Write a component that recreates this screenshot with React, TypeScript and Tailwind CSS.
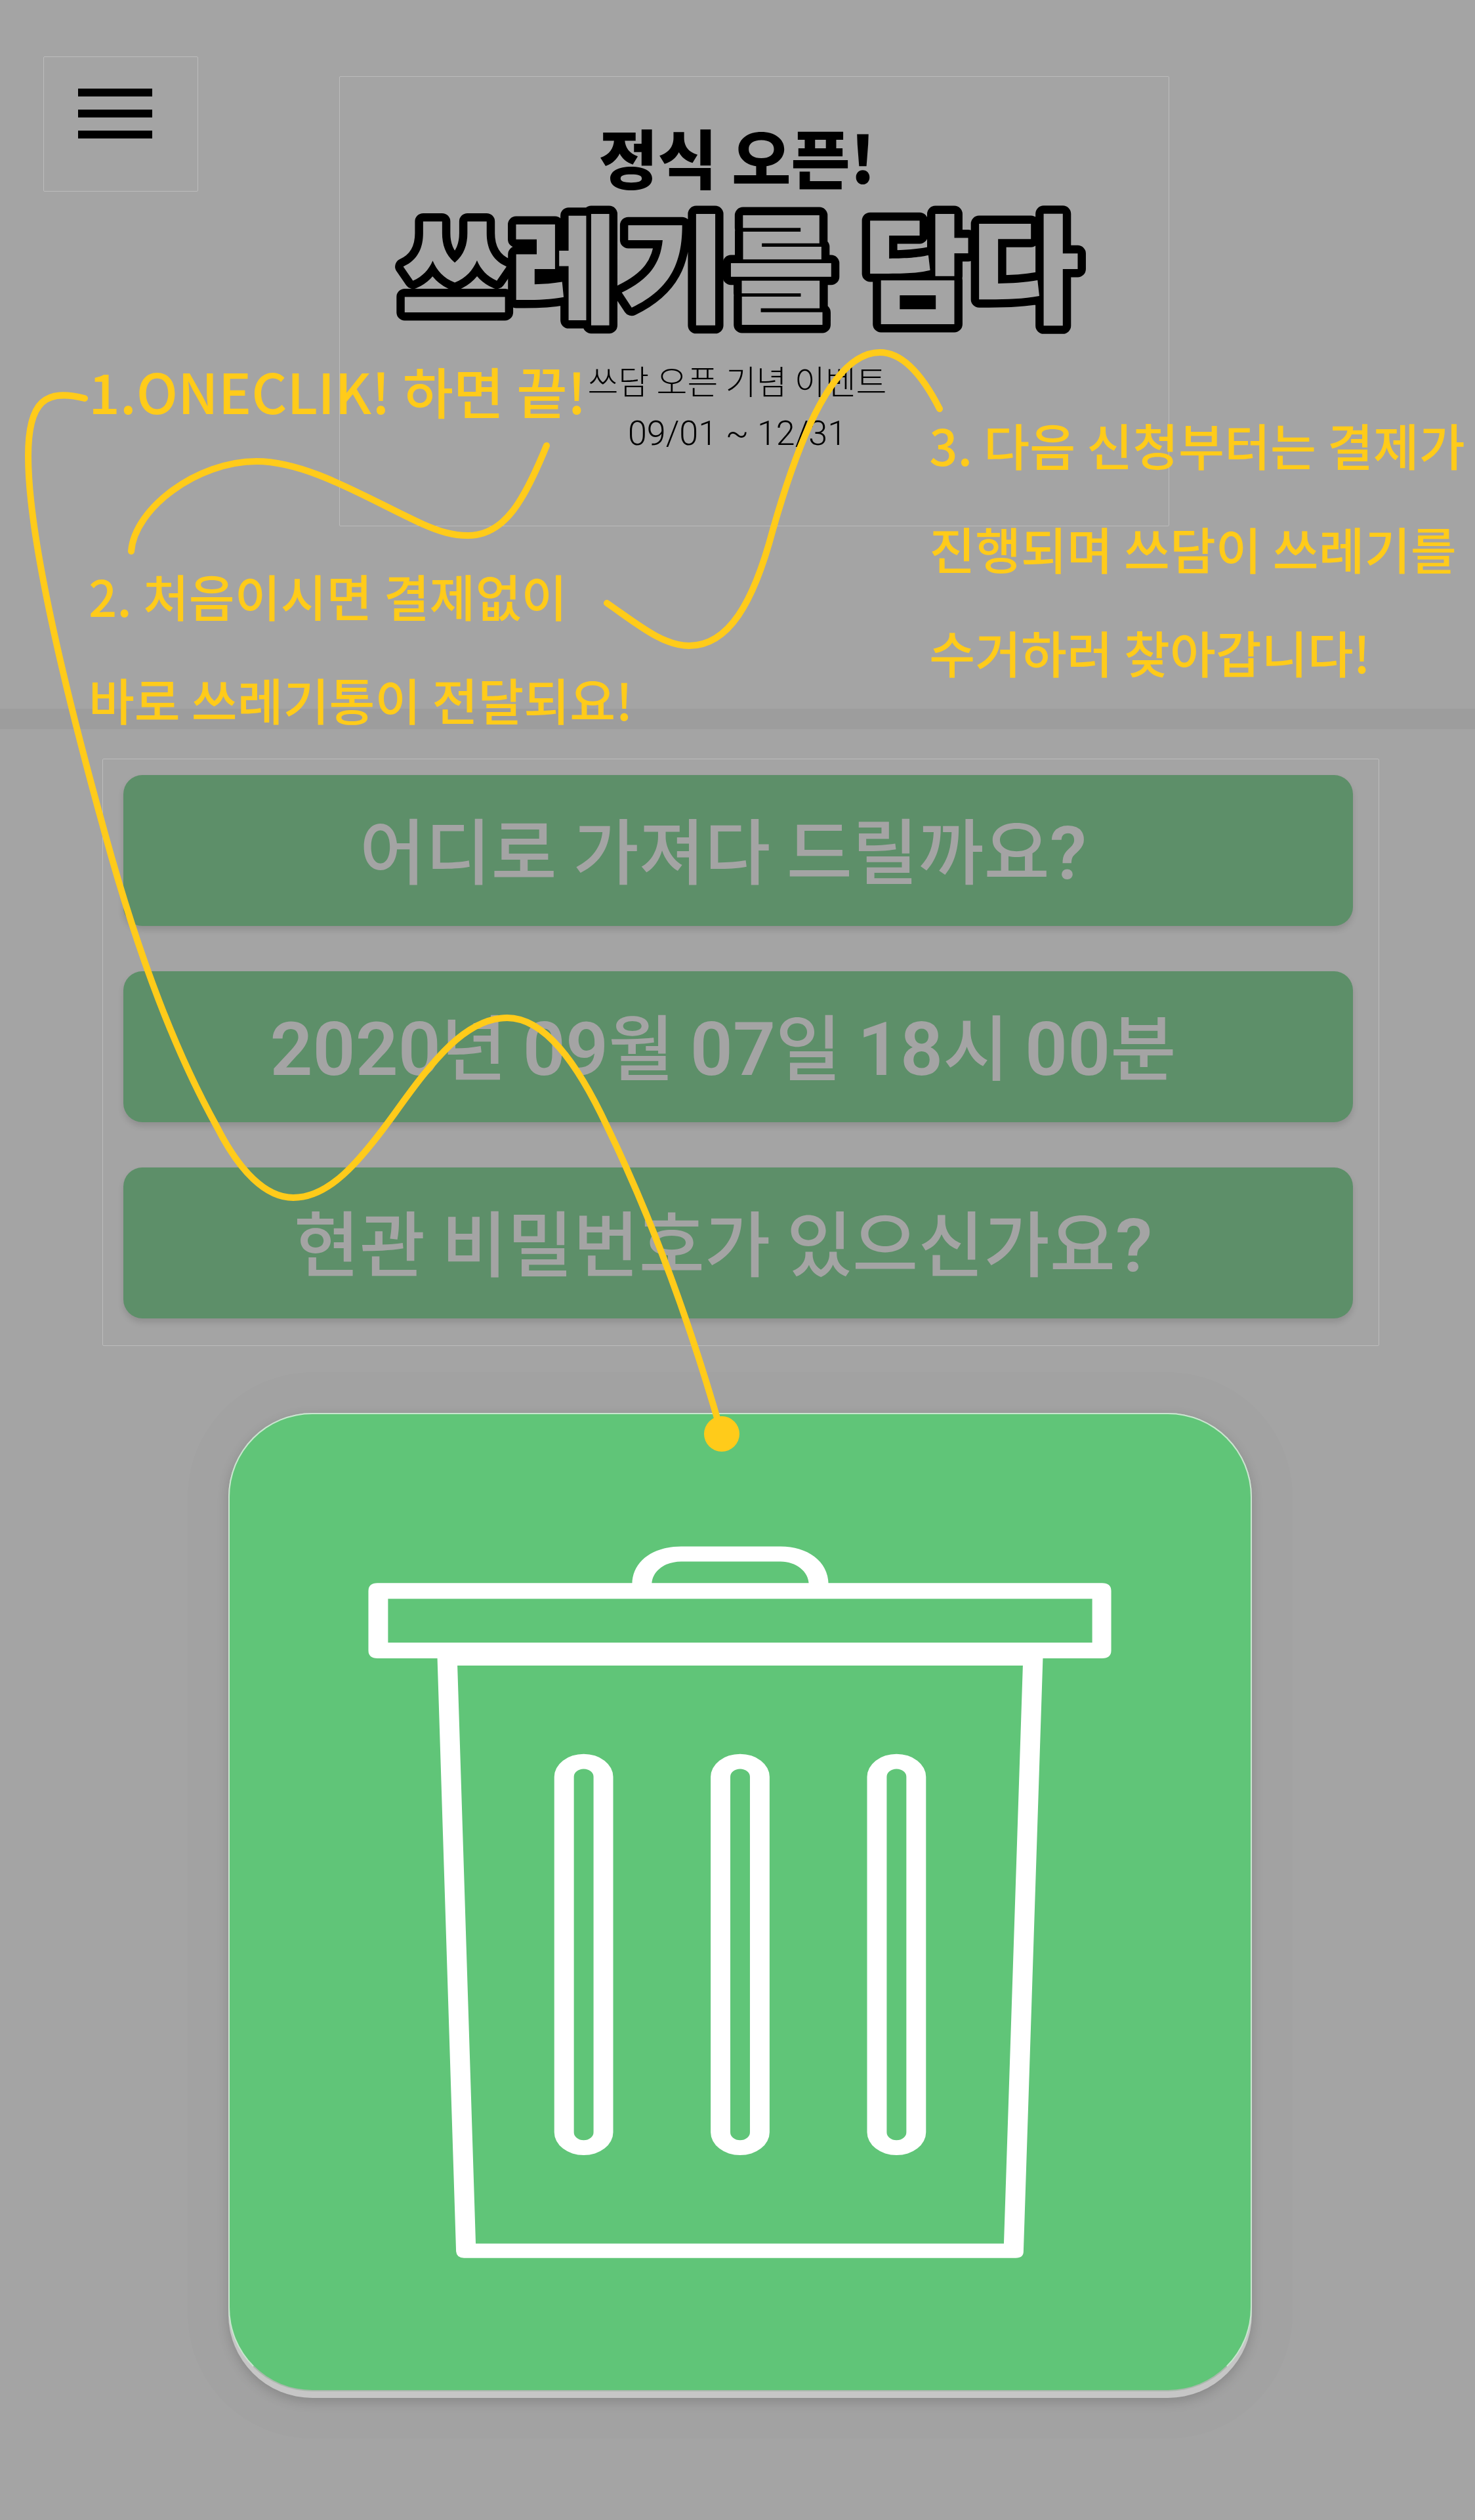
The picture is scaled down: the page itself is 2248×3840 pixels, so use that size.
import { Fragment } from "react";

const steps = [
  { id: "address", label: "어디로 가져다 드릴까요?" },
  { id: "schedule", label: "2020년 09월 07일 18시 00분" },
  { id: "door", label: "현관 비밀번호가 있으신가요?" },
];

/* Latin digits and marks are set in Roboto, a little larger than the Hangul. */
function StepLabel({ text }: { text: string }) {
  return (
    <>
      {text.split(/([0-9?]+)/).map((part, i) =>
        /[0-9?]/.test(part) ? (
          <span key={i} className="font-['Roboto'] text-[114px] font-semibold">
            {part}
          </span>
        ) : (
          <Fragment key={i}>{part}</Fragment>
        ),
      )}
    </>
  );
}

function MenuButton() {
  return (
    <button
      type="button"
      aria-label="메뉴"
      className="flex h-[206px] w-[236px] shrink-0 flex-col gap-5 rounded-[2px] border border-[#bcbcbc] pt-[48px] pl-[52px]"
    >
      <span className="h-3 w-[113px] bg-black" />
      <span className="h-3 w-[113px] bg-black" />
      <span className="h-3 w-[113px] bg-black" />
    </button>
  );
}

function Banner() {
  return (
    <a
      href="#event"
      className="mt-[30px] mr-[400px] ml-[215px] flex flex-1 flex-col items-center rounded-[2px] border border-[#bcbcbc] pt-[72px] pr-[52px] pb-[110px] text-black"
    >
      <span className="text-[98px] leading-[96px] font-black whitespace-nowrap">정식 오픈!</span>
      <h1 className="mt-4">
        <svg viewBox="0 0 1080 208" className="block h-[208px] w-[1080px] overflow-visible">
          <text
            x="544"
            y="177"
            textAnchor="middle"
            fill="#a4a4a4"
            stroke="#000000"
            strokeWidth="25"
            strokeLinejoin="round"
            paintOrder="stroke"
            className="text-[180px] font-black"
          >
            쓰레기를 담다
          </text>
        </svg>
      </h1>
      <span className="mt-10 text-[51px] leading-[60px] font-light whitespace-nowrap">
        쓰담 오픈 기념 이벤트
      </span>
      <span className="mt-[22px] font-['Roboto'] text-[52px] leading-[60px] font-light whitespace-nowrap">
        09/01 ~ 12/31
      </span>
    </a>
  );
}

function TrashDrawing() {
  return (
    <svg viewBox="348 2154 1560 1491" className="block w-full" aria-hidden="true">
      <g fill="#ffffff" fillRule="evenodd">
        <path d="M963 2414C963 2378 996 2356 1038 2356H1190C1230 2356 1263 2378 1263 2414H1233C1233 2394 1213 2379 1190 2379H1038C1013 2379 993 2394 993 2414Z" />
        <path d="M574 2412H1681Q1695 2412 1695 2424V2515Q1695 2527 1681 2527H574Q560 2527 560 2515V2424Q560 2412 574 2412ZM590 2436V2503H1666V2436Z" />
        <path d="M665 2515H1591L1561 3433Q1561 3443 1549 3443H706Q695 3443 694 3433ZM696 2538L724 3421H1531L1560 2538Z" />
        {[844, 1083, 1322].map((x) => (
          <path
            key={x}
            d={`M${x} 2708a45 35 0 0 1 90 0V3251a45 35 0 0 1 -90 0ZM${x + 30} 2708V3251a15 12 0 0 0 30 0V2708a15 12 0 0 0 -30 0Z`}
          />
        ))}
      </g>
    </svg>
  );
}

function GuideLines() {
  return (
    <svg
      viewBox="0 0 2248 3840"
      className="pointer-events-none absolute inset-x-0 top-0 w-full"
      aria-hidden="true"
    >
      <g fill="none" stroke="#ffcb1a" strokeWidth="10" strokeLinecap="round" strokeLinejoin="round">
        <path d="M129 607C70 592 43 610 43 695C43 830 110 1090 158 1263C205 1436 260 1590 330 1716C365 1785 405 1825 447 1825C500 1825 545 1775 602 1696C660 1615 710 1551 773 1551C830 1551 880 1620 925 1716C990 1850 1050 2010 1100 2185" />
        <path d="M200 840C205 775 300 703 391 703C470 703 560 760 645 799C670 810 690 816 713 816C770 816 800 760 833 679" />
        <path d="M925 919C970 950 1010 984 1050 984C1110 984 1148 920 1178 807C1220 660 1272 537 1341 537C1375 537 1405 570 1432 623" />
      </g>
      <circle cx="1100" cy="2185" r="27" fill="#ffcb1a" />
    </svg>
  );
}

function Notes() {
  return (
    <div className="pointer-events-none absolute inset-x-0 top-0 text-[76px] leading-[158px] font-medium whitespace-nowrap text-[#ffcb1a]">
      <p className="absolute top-[516px] left-[6%] text-[84px]">1.ONECLIK! 하면 끝!</p>
      <p className="absolute top-[828px] left-[6%]">
        2. 처음이시면 결제없이
        <br />
        바로 쓰레기통이 전달되요!
      </p>
      <p className="absolute top-[598px] left-[63%]">
        3. 다음 신청부터는 결제가
        <br />
        진행되며 쓰담이 쓰레기를
        <br />
        수거하러 찾아갑니다!
      </p>
    </div>
  );
}

export default function App() {
  return (
    <main className="relative min-h-screen overflow-hidden bg-[#a4a4a4] pb-[184px] font-['Noto_Sans_CJK_KR',sans-serif]">
      <header className="flex items-start border-b-[31px] border-[#9d9d9d] px-[66px] pt-[86px] pb-[278px]">
        <MenuButton />
        <Banner />
      </header>

      <section className="mt-[45px] mr-[146px] ml-[156px] flex flex-col gap-[69px] rounded-[2px] border border-[#bcbcbc] pt-6 pr-[39px] pb-[41px] pl-[31px]">
        {steps.map((step) => (
          <button
            key={step.id}
            type="button"
            className="h-[230px] rounded-[29px] bg-[#5d8f69] pr-[46px] text-[109px] leading-[120px] font-medium whitespace-nowrap text-[#a4a4a4] shadow-[0_6px_10px_rgba(0,0,0,0.12)]"
          >
            <StepLabel text={step.label} />
          </button>
        ))}
      </section>

      <button
        type="button"
        aria-label="쓰레기통 신청"
        className="mt-[102px] mr-[340px] ml-[348px] block w-[calc(100%-688px)] rounded-[128px] bg-[#c6c6c6] pb-[10px] shadow-[0_6px_18px_rgba(0,0,0,0.16),0_0_0_62px_rgba(0,0,0,0.012)]"
      >
        <span className="block rounded-[128px] border-2 border-[#c9e6cf] border-b-[#a9b9ac] bg-[#60c578]">
          <TrashDrawing />
        </span>
      </button>

      <Notes />
      <GuideLines />
    </main>
  );
}
